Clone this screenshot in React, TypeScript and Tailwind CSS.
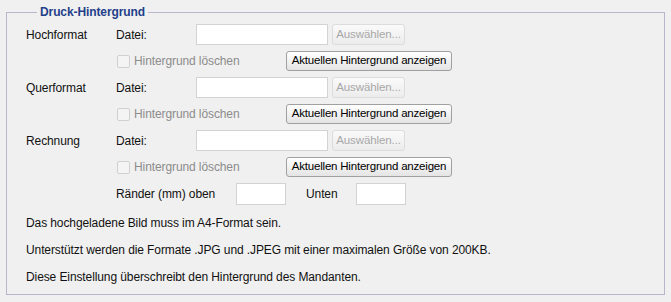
import React from "react";

const font = "font-['Liberation_Sans',Arial,sans-serif]";

function FileRow({ label }: { label: string }) {
  return (
    <div className="flex h-[21px] items-center">
      <span className="w-[90px]">{label}</span>
      <span className="w-[80px]">Datei:</span>
      <input
        type="text"
        className="h-[21px] w-[132px] border border-[#d3d3d3] bg-white outline-none"
      />
      <button
        disabled
        className="ml-[4px] h-[21px] w-[73px] whitespace-nowrap rounded-[3px] border border-[#dcdcdc] bg-gradient-to-b from-[#fafafa] to-[#ececec] text-[11.5px] text-[#a8a8a8]"
      >
        Auswählen...
      </button>
    </div>
  );
}

function DeleteRow() {
  return (
    <div className="flex h-[20px] items-center">
      <span className="w-[91px]" />
      <span className="h-[13px] w-[13px] rounded-[2px] border border-[#d0d0d0] bg-[#f4f4f4]" />
      <span className="ml-[4px] w-[152px] text-[#8c8c8c]">Hintergrund löschen</span>
      <button className="h-[20px] w-[166px] whitespace-nowrap rounded-[3px] border border-[#a0a0a0] bg-gradient-to-b from-white to-[#e4e4e4] text-[11.5px] tracking-[-0.2px] text-black">
        Aktuellen Hintergrund anzeigen
      </button>
    </div>
  );
}

export default function App() {
  return (
    <div
      className={`min-h-[302px] bg-[#f0f0f0] pt-[3px] text-[12px] tracking-[-0.1px] text-[#111] ${font}`}
    >
      <fieldset className="mx-[6px] h-[292px] border border-[#b7b7cb] pl-[19px]">
        <legend className="ml-[11px] px-[3px] text-[12px] font-bold text-[#1f3f8a]">
          Druck-Hintergrund
        </legend>
        <div className="mt-[3px] flex flex-col gap-[6px]">
          <FileRow label="Hochformat" />
          <DeleteRow />
          <FileRow label="Querformat" />
          <DeleteRow />
          <FileRow label="Rechnung" />
          <DeleteRow />
          <div className="flex h-[22px] items-center">
            <span className="w-[90px]" />
            <span className="w-[120px]">Ränder (mm) oben</span>
            <input
              type="text"
              className="h-[22px] w-[50px] border border-[#d3d3d3] bg-white outline-none"
            />
            <span className="ml-[20px] w-[50px]">Unten</span>
            <input
              type="text"
              className="h-[22px] w-[50px] border border-[#d3d3d3] bg-white outline-none"
            />
          </div>
          <p className="mt-[2px] leading-[21px]">Das hochgeladene Bild muss im A4-Format sein.</p>
          <p className="leading-[21px]">
            Unterstützt werden die Formate .JPG und .JPEG mit einer maximalen Größe von 200KB.
          </p>
          <p className="leading-[21px]">Diese Einstellung überschreibt den Hintergrund des Mandanten.</p>
        </div>
      </fieldset>
    </div>
  );
}
